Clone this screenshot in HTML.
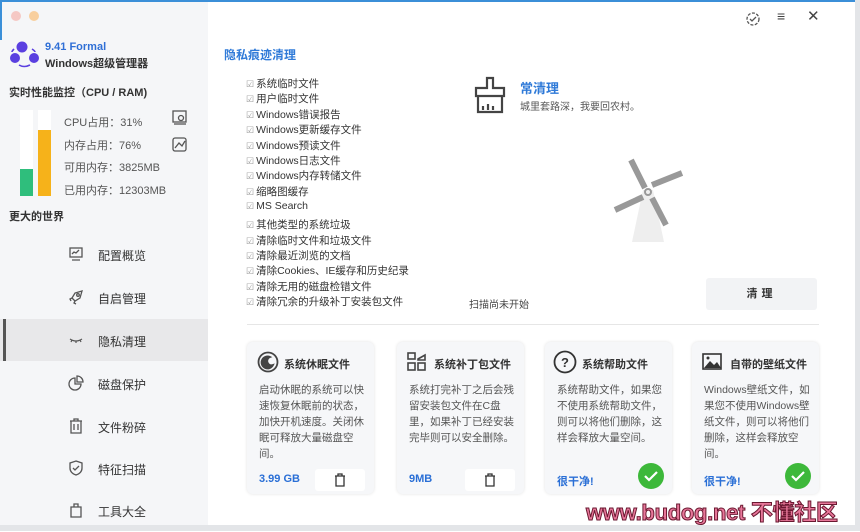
<!DOCTYPE html><html><head><meta charset="utf-8"><style>
*{margin:0;padding:0;box-sizing:border-box}
body{width:860px;height:531px;overflow:hidden;background:#fff;font-family:"Liberation Sans","Noto Sans CJK SC",sans-serif;position:relative;color:#333}
.a{position:absolute}
.side{left:0;top:0;width:208px;height:531px;background:#f5f6f8}
.mi{position:absolute;left:0;width:208px;height:43px;font-size:12px;color:#333}
.mi span{position:absolute;left:98px;top:14px}
.mi svg{position:absolute;left:68px;top:13px}
.ck{font-size:10.5px;color:#333;position:absolute;left:246px;white-space:nowrap}
.ck:before{content:"☑";color:#999;font-size:9px;margin-right:2px}
.card{position:absolute;top:342px;width:127px;height:152px;background:#f6f7f9;border-radius:6px;box-shadow:0 0 3px rgba(0,0,0,.12)}
.card h4{position:absolute;left:37px;top:14px;font-size:11px;font-weight:bold;color:#333}
.card p{position:absolute;left:12px;top:40px;width:108px;font-size:10.5px;line-height:16px;color:#555}
.card b{position:absolute;left:12px;top:131px;font-size:11px;color:#2a6fd6}
.card .bin{position:absolute;left:68px;top:127px;width:50px;height:22px;background:#fff;border-radius:3px}
.card .ok{position:absolute;left:93px;top:121px;width:26px;height:26px;border-radius:50%;background:#3db83a}
</style></head><body>
<div class="a side"></div>
<div class="a" style="left:0;top:0;width:860px;height:2px;background:#3b8fd8"></div>
<div class="a" style="left:0;top:0;width:2px;height:40px;background:#3b8fd8"></div>
<div class="a" style="left:855px;top:0;width:5px;height:531px;background:#e3e5e8"></div>
<div class="a" style="left:0;top:525px;width:860px;height:6px;background:#e3e5e8"></div>
<div class="a" style="left:11px;top:11px;width:10px;height:10px;border-radius:50%;background:#f5c8c4"></div>
<div class="a" style="left:29px;top:11px;width:10px;height:10px;border-radius:50%;background:#f8cf9e"></div>
<svg class="a" style="left:9px;top:39px" width="30" height="30"><circle cx="13" cy="8" r="5.5" fill="#5a3fe0"/><circle cx="6" cy="19" r="5" fill="#5a3fe0"/><circle cx="25" cy="19" r="5" fill="#5a3fe0"/><path d="M5 10 Q3 12 3 13 M23 10 Q26 12 26 13 M10 26 Q15 29 21 26" stroke="#5a3fe0" stroke-width="1.6" fill="none"/></svg>
<div class="a" style="left:45px;top:41px;font-size:11px;font-weight:bold;color:#2f6fd6">9.41 Formal</div>
<div class="a" style="left:45px;top:55px;font-size:11px;font-weight:bold;color:#333">Windows超级管理器</div>
<div class="a" style="left:9px;top:84px;font-size:11px;font-weight:bold;color:#333">实时性能监控（CPU / RAM)</div>
<div class="a" style="left:20px;top:110px;width:13px;height:86px;background:#fff"></div>
<div class="a" style="left:20px;top:169px;width:13px;height:27px;background:#2fbe7c"></div>
<div class="a" style="left:38px;top:110px;width:13px;height:86px;background:#fff"></div>
<div class="a" style="left:38px;top:130px;width:13px;height:66px;background:#f6b21a"></div>
<div class="a" style="left:64px;top:112px;font-size:11px;color:#555;line-height:22.5px">CPU占用：31%<br>内存占用：76%<br>可用内存：3825MB<br>已用内存：12303MB</div>
<svg class="a" style="left:172px;top:110px" width="16" height="16" fill="none" stroke="#555" stroke-width="1.3"><rect x="1" y="1" width="13" height="11"/><circle cx="9" cy="8" r="2.5"/><path d="M2 14h12"/></svg>
<svg class="a" style="left:172px;top:137px" width="16" height="16" fill="none" stroke="#555" stroke-width="1.3"><rect x="1" y="1" width="13" height="13" rx="2"/><path d="M3 11l4-5 3 3 3-5"/></svg>
<div class="a" style="left:9px;top:208px;font-size:11px;font-weight:bold;color:#333">更大的世界</div>
<div class="mi" style="top:233px"><svg width="16" height="16" fill="none" stroke="#555" stroke-width="1.3"><rect x="2" y="2" width="12" height="9"/><path d="M4 8l2-2 2 1 3-3M4 14h8"/></svg><span>配置概览</span></div>
<div class="mi" style="top:276px"><svg width="16" height="16" fill="none" stroke="#555" stroke-width="1.3"><path d="M14 2L7 4 4 9l3 3 5-3zM4 9l-2 1 1 2M7 12l-1 2 2 1"/><circle cx="10" cy="6" r="1.3"/></svg><span>自启管理</span></div>
<div class="mi" style="top:319px;background:#e8e8ea;height:42px"><div class="a" style="left:3px;top:0;width:3px;height:42px;background:#555"></div><svg width="16" height="16" fill="none" stroke="#555" stroke-width="1.2"><path d="M2 7q6 4 12 0M4 8l-1 2M8 9v2M12 8l1 2"/></svg><span>隐私清理</span></div>
<div class="mi" style="top:362px"><svg width="16" height="16" fill="none" stroke="#555" stroke-width="1.3"><path d="M7 3a6 6 0 1 0 6 6H7z"/><path d="M9 1v6h6a6 6 0 0 0-6-6z"/></svg><span>磁盘保护</span></div>
<div class="mi" style="top:405px"><svg width="16" height="16" fill="none" stroke="#555" stroke-width="1.3"><path d="M2 3h12M6 3V1h4v2M3 3v12h10V3M6 6v6M10 6v6"/></svg><span>文件粉碎</span></div>
<div class="mi" style="top:447px"><svg width="16" height="16" fill="none" stroke="#555" stroke-width="1.3"><path d="M8 1l6 2v5c0 4-3 6-6 7-3-1-6-3-6-7V3z M5 8l2 2 4-4"/></svg><span>特征扫描</span></div>
<div class="mi" style="top:489px"><svg width="16" height="16" fill="none" stroke="#555" stroke-width="1.3"><path d="M3 5h10v10H3zM6 5V2h4v3"/></svg><span>工具大全</span></div>
<svg class="a" style="left:745px;top:11px" width="16" height="16" fill="none" stroke="#555" stroke-width="1.3"><circle cx="8" cy="8" r="6" stroke-dasharray="3 1.5"/><path d="M5 8l2 2 4-4"/></svg>
<div class="a" style="left:777px;top:8px;font-size:14px;color:#444">≡</div>
<div class="a" style="left:807px;top:7px;font-size:15px;color:#444">✕</div>
<div class="a" style="left:224px;top:46px;font-size:12px;font-weight:bold;color:#2f7ad8">隐私痕迹清理</div>
<div class="ck" style="top:76px">系统临时文件</div><div class="ck" style="top:91px">用户临时文件</div><div class="ck" style="top:107px">Windows错误报告</div><div class="ck" style="top:122px">Windows更新缓存文件</div><div class="ck" style="top:138px">Windows预读文件</div><div class="ck" style="top:153px">Windows日志文件</div><div class="ck" style="top:168px">Windows内存转储文件</div><div class="ck" style="top:184px">缩略图缓存</div><div class="ck" style="top:200px">MS Search</div><div class="ck" style="top:217px">其他类型的系统垃圾</div><div class="ck" style="top:233px">清除临时文件和垃圾文件</div><div class="ck" style="top:248px">清除最近浏览的文档</div><div class="ck" style="top:263px">清除Cookies、IE缓存和历史纪录</div><div class="ck" style="top:279px">清除无用的磁盘检错文件</div><div class="ck" style="top:294px">清除冗余的升级补丁安装包文件</div>
<svg class="a" style="left:473px;top:76px" width="34" height="40" fill="none" stroke="#444" stroke-width="2.2"><path d="M14 2h6v10h11v8H3v-8h11z M5 20v16h24V20M10 34v-4M15 34v-6M20 34v-4"/></svg>
<div class="a" style="left:520px;top:78px;font-size:13px;font-weight:bold;color:#2f7ad8">常清理</div>
<div class="a" style="left:520px;top:98px;font-size:10px;color:#555">城里套路深，我要回农村。</div>
<svg class="a" style="left:612px;top:158px" width="72" height="86"><path d="M31 32 L41 32 L52 84 L20 84Z" fill="#eeeeee"/><g stroke="#999" stroke-width="6"><line x1="19" y1="2" x2="33" y2="30"/><line x1="40" y1="27" x2="70" y2="15"/><line x1="31" y1="39" x2="3" y2="52"/><line x1="40" y1="40" x2="54" y2="67"/></g><circle cx="36" cy="34" r="3" fill="none" stroke="#999" stroke-width="2"/></svg>
<div class="a" style="left:469px;top:296px;font-size:10px;color:#444">扫描尚未开始</div>
<div class="a" style="left:706px;top:278px;width:111px;height:32px;background:#f2f3f5;border-radius:3px;text-align:center;line-height:32px;font-size:11px;font-weight:bold;letter-spacing:4px">清理</div>
<div class="a" style="left:247px;top:324px;width:572px;height:1px;background:#e6e6e6"></div>
<div class="card" style="left:247px"><svg class="a" style="left:10px;top:9px" width="22" height="22" fill="none" stroke="#444" stroke-width="1.8"><circle cx="11" cy="11" r="9.5"/><path d="M13 6a6 6 0 1 0 3 8 4 4 0 0 1-3-8z" fill="#444"/></svg><h4>系统休眠文件</h4><p>启动休眠的系统可以快速恢复休眠前的状态，加快开机速度。关闭休眠可释放大量磁盘空间。</p><b>3.99 GB</b><div class="bin"><svg class="a" style="left:19px;top:4px" width="12" height="14" fill="none" stroke="#333" stroke-width="1.3"><path d="M1 3h10M4 3V1h4v2M2 3v10h8V3"/></svg></div></div>
<div class="card" style="left:397px"><svg class="a" style="left:10px;top:10px" width="20" height="20" fill="none" stroke="#444" stroke-width="1.6"><rect x="1" y="1" width="7" height="6"/><rect x="1" y="11" width="7" height="7"/><rect x="11" y="11" width="7" height="7"/><path d="M11 7l7-4v5h-7z"/></svg><h4>系统补丁包文件</h4><p>系统打完补丁之后会残留安装包文件在C盘里，如果补丁已经安装完毕则可以安全删除。</p><b>9MB</b><div class="bin"><svg class="a" style="left:19px;top:4px" width="12" height="14" fill="none" stroke="#333" stroke-width="1.3"><path d="M1 3h10M4 3V1h4v2M2 3v10h8V3"/></svg></div></div>
<div class="card" style="left:545px"><svg class="a" style="left:8px;top:8px" width="24" height="24" fill="none" stroke="#333" stroke-width="1.8"><circle cx="12" cy="12" r="10.5"/><text x="12" y="17" font-size="13" font-weight="bold" text-anchor="middle" fill="#333" stroke="none" font-family="Liberation Sans">?</text></svg><h4>系统帮助文件</h4><p>系统帮助文件，如果您不使用系统帮助文件，则可以将他们删除，这样会释放大量空间。</p><b>很干净!</b><div class="ok"><svg width="26" height="26" fill="none" stroke="#fff" stroke-width="2.2"><path d="M7 13l4 4 8-8"/></svg></div></div>
<div class="card" style="left:692px"><svg class="a" style="left:10px;top:11px" width="20" height="17"><rect x="1" y="1" width="18" height="15" fill="none" stroke="#333" stroke-width="1.6"/><path d="M2 15l6-7 4 4 3-3 4 6z" fill="#333"/><circle cx="6" cy="5" r="1.5" fill="#333"/></svg><h4 style="left:38px">自带的壁纸文件</h4><p>Windows壁纸文件，如果您不使用Windows壁纸文件，则可以将他们删除，这样会释放空间。</p><b>很干净!</b><div class="ok"><svg width="26" height="26" fill="none" stroke="#fff" stroke-width="2.2"><path d="M7 13l4 4 8-8"/></svg></div></div>
<div class="a" style="left:586px;top:495px;font-size:22px;font-weight:bold;color:#e8779a;letter-spacing:-0.3px;-webkit-text-stroke:1px #6a1830;white-space:nowrap">www.budog.net 不懂社区</div>
</body></html>
